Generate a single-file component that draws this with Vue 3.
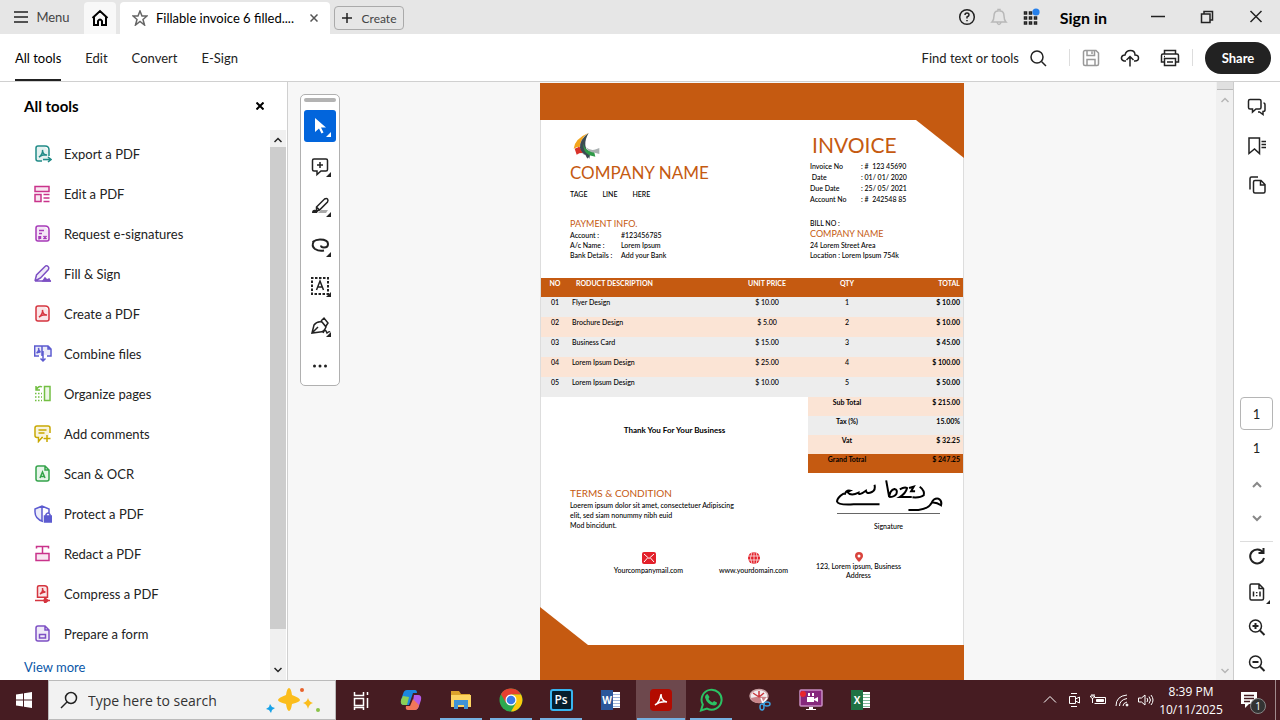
<script setup>
import { ref } from 'vue';

const menus = ['All tools', 'Edit', 'Convert', 'E-Sign'];
const activeMenu = ref('All tools');
const pageNo = ref('1');
const search = ref('');

const pdfMark = 'M5 12c2-1 4-4.500 3.500-7 0 3 2 5 4.500 5-3-.5-6 .5-8 2z';

// tint = pale area, line = outline, solid = filled parts
const tools = [
  { name: 'Export a PDF', color: '#1f8a86', tint: 'M2 2h9l4 4v10H2z',
    line: 'M8 16H4a2 2 0 0 1-2-2V3a2 2 0 0 1 2-2h7q4 0 4 4v6M9 14.500h7M14 12l3 2.500-3 2.500' + pdfMark },
  { name: 'Edit a PDF', color: '#c9338b', tint: 'M1 2h14v5H1zM1 10h6v7H1z',
    line: 'M1 1.500h14v5H1zM1 9.500h6v7H1zM9.500 9.500H15.500M9.500 13H15.500M9.500 16.500H15.500' },
  { name: 'Request e-signatures', color: '#a63ab8', tint: 'M2 2h9l4 4v10H2z',
    line: 'M4 1h7q4 0 4 4v9a2 2 0 0 1-2 2H4a2 2 0 0 1-2-2V3a2 2 0 0 1 2-2zM5 5.500h5M5 8.500h3M9.500 11l3 3M12.500 11l-3 3M5 11v3.500M6.500 11v3' },
  { name: 'Fill & Sign', color: '#7d50c4', tint: 'M3 11L11 2l4 2-8 10-5 2z',
    line: 'M1 16l1.500-6L10.500 2q2-2 3.500-.5t0 3.500l-7.500 8L1 16h8M9 16h8', solid: 'M9 16l2-3 2 2 2-1 1 2z' },
  { name: 'Create a PDF', color: '#d5353f', tint: 'M2 2h9l4 4v10H2z',
    line: 'M4 1h7q4 0 4 4v9a2 2 0 0 1-2 2H4a2 2 0 0 1-2-2V3a2 2 0 0 1 2-2z' + pdfMark },
  { name: 'Combine files', color: '#5c5bd0', tint: 'M1 1h15v9H1z',
    line: 'M5 11H0.700V1H8v10M8 1h6l3 3v7h-4M14 1v3h3M9 6v10M6.500 13.500L9 16l2.500-2.500M2.500 8q3-2 2-5 0 3 2 4-2 0-4 1' },
  { name: 'Organize pages', color: '#73bf43', tint: 'M10 2h5v13h-5z',
    line: 'M10.500 1.500h5.500v14h-5.500zM2 5q3-5 6-3M2 1v4h4', dash: 'M1 8.500h7M1 12h7M1 15.500h7' },
  { name: 'Add comments', color: '#c8a800', tint: 'M2 2h13v10H2z',
    line: 'M9 12.500H8l-3.500 4v-4H3a2 2 0 0 1-2-2V3a2 2 0 0 1 2-2h11a2 2 0 0 1 2 2v5M4.500 5h8M4.500 8h6M13 10v7M9.500 13.500h7' },
  { name: 'Scan & OCR', color: '#35a34b', tint: 'M2 2h9l4 4v10H2z',
    line: 'M4 1h7l4 4v9a2 2 0 0 1-2 2H4a2 2 0 0 1-2-2V3a2 2 0 0 1 2-2zM11 1v4h4M6 13l2.500-6 2.500 6M7 11.500h3' },
  { name: 'Protect a PDF', color: '#5c5bd0', tint: 'M1 3l7-2v15Q1 13 1 3z',
    line: 'M9 16.500Q1 14 1 7V4l7-3 7 3v4M8 1v15M12 11V9.500q2-3 4 0V11', solid: 'M10.500 11h7v6h-7z' },
  { name: 'Redact a PDF', color: '#c9338b', tint: 'M2 9h13v6H2z',
    line: 'M2 8.500h13v7H2zM8.500 1v7M2.500 3.500V1.500h12v2' },
  { name: 'Compress a PDF', color: '#d5353f', tint: 'M4 1h7l3 3v8H4z',
    line: 'M5 .8h5.500q3 0 3 3v8.500h-10V2q0-1.200 1.500-1.200zM1 15.500h15M6 9c2-1 3-3 2.500-6 0 3 1 4 3 4-2 0-4 1-5.500 2', solid: 'M11 13l3 2.500-3 2.500-1-2.500z' },
  { name: 'Prepare a form', color: '#7d50c4', tint: 'M2 2h9l4 4v10H2z',
    line: 'M4 1h7l4 4v9a2 2 0 0 1-2 2H4a2 2 0 0 1-2-2V3a2 2 0 0 1 2-2zM11 1v4h4M5.500 9.500h6V13h-6z' },
];

const meta = [
  ['Invoice No', ': #  123 45690'],
  ['\u00a0Date', ': 01/ 01/ 2020'],
  ['Due Date', ': 25/ 05/ 2021'],
  ['Account No', ': #  242548 85'],
];

const payment = [
  ['Account :', '#123456785'],
  ['A/c Name :', 'Lorem Ipsum'],
  ['Bank Details :', 'Add your Bank'],
];

const items = [
  ['01', 'Flyer Design', '$ 10.00', '1', '$ 10.00'],
  ['02', 'Brochure Design', '$ 5.00', '2', '$ 10.00'],
  ['03', 'Business Card', '$ 15.00', '3', '$ 45.00'],
  ['04', 'Lorem Ipsum Design', '$ 25.00', '4', '$ 100.00'],
  ['05', 'Lorem Ipsum Design', '$ 10.00', '5', '$ 50.00'],
];

const totals = [
  ['Sub Total', '$ 215.00'],
  ['Tax (%)', '15.00%'],
  ['Vat', '$ 32.25'],
  ['Grand Totral', '$ 247.25'],
];
</script>

<template>
  <div class="app">
    <header class="titlebar">
      <button class="menu-btn">
        <svg width="14" height="12" viewBox="0 0 14 12"><path d="M0 1h14M0 6h14M0 11h14" /></svg>
        Menu
      </button>
      <button class="home" aria-label="Home">
        <svg width="18" height="18" viewBox="0 0 18 18"><path class="bold" d="M1.500 9L9 2l7.500 7M3 8v8h4v-4q2-3 4 0v4h4V8" /></svg>
      </button>
      <div class="doc-tab">
        <svg width="16" height="16" viewBox="0 0 16 16"><path class="star" d="M8 1l2 5h5l-4 3.500L12.500 15 8 11.500 3.500 15 5 9.500 1 6h5z" /></svg>
        <span>Fillable invoice 6 filled....</span>
        <button aria-label="Close tab"><svg width="8" height="8" viewBox="0 0 8 8"><path d="M.5.5l7 7M7.500.5l-7 7" /></svg></button>
      </div>
      <button class="create">
        <svg width="10" height="10" viewBox="0 0 10 10"><path d="M5 0v10M0 5h10" /></svg>
        Create
      </button>
      <div class="title-right">
        <button aria-label="Help">
          <svg width="18" height="18" viewBox="0 0 18 18"><circle cx="9" cy="9" r="7.300" /><path d="M7 7q0-2 2-2t2 2q0 1-2 2v1.500M9 12v1.300" /></svg>
        </button>
        <button aria-label="Notifications">
          <svg width="18" height="18" viewBox="0 0 18 18"><path class="pale" d="M2 14q2-2 2-6 0-5 4-5V1.500h2V3q4 0 4 5 0 4 2 6zM7 14.500q2 4 4 0" /></svg>
        </button>
        <button aria-label="Apps">
          <svg width="18" height="18" viewBox="0 0 18 18">
            <path d="M2.500 4h2v2h-2zM7.500 4h2v2h-2zM2.500 9h2v2h-2zM7.500 9h2v2h-2zM12.500 9h2v2h-2zM2.500 14h2v2h-2zM7.500 14h2v2h-2zM12.500 14h2v2h-2z" />
            <circle class="dot" cx="14" cy="4" r="3.600" />
          </svg>
        </button>
        <button class="sign-in">Sign in</button>
      </div>
      <div class="window-btns">
        <button aria-label="Minimize"><svg width="14" height="14" viewBox="0 0 14 14"><path d="M0 6.500h14" /></svg></button>
        <button aria-label="Restore"><svg width="14" height="14" viewBox="0 0 14 14"><path d="M1.500 4h8.500v8.500H1.500zM4 4V1.500h8.500V10h-2.500" /></svg></button>
        <button aria-label="Close"><svg width="14" height="14" viewBox="0 0 14 14"><path d="M1.500 1l11 11M12.500 1l-11 11" /></svg></button>
      </div>
    </header>

    <nav class="toolbar">
      <button v-for="m in menus" :key="m" class="menu" :class="{ active: m == activeMenu }" @click="activeMenu = m">{{ m }}</button>
      <div class="toolbar-right">
        <button class="find">
          Find text or tools
          <svg width="18" height="18" viewBox="0 0 18 18"><circle cx="8" cy="8" r="6" /><path d="M12.500 12.500L17 17" /></svg>
        </button>
        <i class="sep"></i>
        <button aria-label="Save">
          <svg width="18" height="18" viewBox="0 0 18 18"><path class="gray" d="M1.500 3a1.500 1.500 0 0 1 1.500-1.500h11l2.500 2.500v11a1.500 1.500 0 0 1-1.500 1.500H3A1.500 1.500 0 0 1 1.500 15zM5 2v4.500h7.500V2M5 16v-5.500h8V16M10 2.500v2.500" /></svg>
        </button>
        <button aria-label="Upload">
          <svg width="20" height="18" viewBox="0 0 20 18"><path d="M6 12H4q-3-1-2.500-3.500T5 6q1-4.500 5.500-4.500T15 6q3.500 0 3.500 3T15 12h-1M10 17.500V8M6.500 11L10 7.500l3.500 3.500" /></svg>
        </button>
        <button aria-label="Print">
          <svg width="20" height="18" viewBox="0 0 20 18"><path d="M4.500 5V1.500h11V5M4.500 13h-3V6.500q0-1.500 1.500-1.500h14q1.500 0 1.500 1.500V13h-3M4.500 9.500h11v7h-11zM7 13h6M4 7.500h1" /></svg>
        </button>
        <i class="sep"></i>
        <button class="share">Share</button>
      </div>
    </nav>

    <main class="main">
      <aside class="sidebar">
        <div class="side-head">
          <h2>All tools</h2>
          <button aria-label="Close panel"><svg width="8" height="8" viewBox="0 0 8 8"><path class="bold" d="M.5.500l7 7M7.500.500l-7 7" /></svg></button>
        </div>
        <div class="side-body">
          <ul>
            <li v-for="t in tools" :key="t.name">
              <button>
                <svg width="18" height="18" viewBox="0 0 18 18">
                  <g :stroke="t.color">
                    <path :d="t.tint" :fill="t.color" fill-opacity=".12" stroke="none" />
                    <path :d="t.line" />
                    <path v-if="t.dash" :d="t.dash" stroke-dasharray="1.500 1.500" />
                    <path v-if="t.solid" :d="t.solid" :fill="t.color" />
                  </g>
                </svg>
                {{ t.name }}
              </button>
            </li>
            <li class="more"><a href="#">View more</a></li>
          </ul>
          <div class="scrollbar">
            <svg width="8" height="6" viewBox="0 0 8 6"><path d="M.5 5L4 1.500 7.500 5" /></svg>
            <div class="thumb"></div>
            <svg width="8" height="6" viewBox="0 0 8 6"><path d="M.5 1L4 4.500 7.500 1" /></svg>
          </div>
        </div>
      </aside>

      <section class="viewer">
        <div class="palette">
          <div class="handle"></div>
          <button class="on" aria-label="Select">
            <svg width="32" height="32" viewBox="0 0 32 32"><path class="fill" d="M11 8v14l4-3.500 2.500 5 2-1-2.500-5h5z" /><path class="fill" d="M27 22v5h-5z" /></svg>
          </button>
          <button aria-label="Add comment">
            <svg width="32" height="32" viewBox="0 0 32 32"><path d="M10 9h12q1.500 0 1.500 1.500v9q0 1.500-1.500 1.500h-5l-4 3.500V21h-3q-1.500 0-1.500-1.500v-9Q8.500 9 10 9zM16 12v6M13 15h6" /><path class="fill" d="M27 22v5h-5z" /></svg>
          </button>
          <button aria-label="Highlight">
            <svg width="32" height="32" viewBox="0 0 32 32"><path class="shade" d="M14 23l3-3h7l-2 3z" /><path d="M12.500 17l8-8q2-1 3 0t0 3l-8 8-3 1zM12.500 17l3 3" /><path class="fill" d="M8 23q0-4 4-3l2 1-1 2zM27 22v5h-5z" /></svg>
          </button>
          <button aria-label="Draw">
            <svg width="32" height="32" viewBox="0 0 32 32"><path class="thick" d="M8.500 12Q12 9.500 16 9.500q8 0 8 4.500 0 3.500-4 3.500-3 0-3-2M10 11q-3 5 1 8 4 2.500 9 1.500" /><path class="fill" d="M27 22v5h-5z" /></svg>
          </button>
          <button aria-label="Text box">
            <svg width="32" height="32" viewBox="0 0 32 32"><path class="thick" stroke-dasharray="2.500 1.500" d="M7 8h17v16H8V8" /><path d="M12.500 20L16 11l3.500 9M14 17h4" /><path class="fill" d="M27 22v5h-5z" /></svg>
          </button>
          <button aria-label="Sign">
            <svg width="32" height="32" viewBox="0 0 32 32"><path d="M8 23l2-8q3-4 8-3l4 5q-2 5-6 5zM8 23l6-6M17 11l3-3 4 5-2 3M19 23q2-4 3-2t1 2q2-2 3-1" /><path class="fill" d="M27 22v5h-5z" /></svg>
          </button>
          <button aria-label="More">
            <svg width="32" height="32" viewBox="0 0 32 32"><circle class="fill" cx="10.500" cy="16" r="1.500" /><circle class="fill" cx="16" cy="16" r="1.500" /><circle class="fill" cx="21.500" cy="16" r="1.500" /></svg>
          </button>
        </div>

        <article class="page">
          <div class="band top"></div>
          <div class="cols head">
            <div>
              <svg class="logo" width="28" height="28" viewBox="0 0 84 84">
                <path fill="#f3a51c" d="M50 2Q8 20 5 50l12-6 5 8q2-34 28-50z" />
                <path fill="#d9322a" d="M8 50l14-6 12 18-12 2-8 4z" />
                <path fill="#3b4a52" d="M50 3Q22 22 24 48q4 16 22 24l6 8 2-12Q28 40 50 3zM26 64l14 4 6 12 6-10z" />
                <path fill="#2f9a48" d="M34 34q4 26 32 24l4 16-18-4Q32 60 34 34z" />
                <path fill="#a9afb0" d="M42 46q14 12 30 6l10-4v18l-14-4q-18 0-26-16z" />
              </svg>
              <h1>COMPANY NAME</h1>
              <p class="tag"><span>TAGE</span><span>LINE</span><span>HERE</span></p>
            </div>
            <div>
              <h1 class="invoice">INVOICE</h1>
              <dl class="meta">
                <template v-for="m in meta" :key="m[0]"><dt>{{ m[0] }}</dt><dd>{{ m[1] }}</dd></template>
              </dl>
            </div>
          </div>

          <div class="cols parties">
            <div>
              <h3>PAYMENT INFO.</h3>
              <dl class="pay">
                <template v-for="p in payment" :key="p[0]"><dt>{{ p[0] }}</dt><dd>{{ p[1] }}</dd></template>
              </dl>
            </div>
            <div>
              <p>BILL NO :</p>
              <h3>COMPANY NAME</h3>
              <p>24 Lorem Street Area</p>
              <p>Location : Lorem Ipsum 754k</p>
            </div>
          </div>

          <table>
            <colgroup><col class="c-no" /><col class="c-desc" /><col class="c-unit" /><col class="c-qty" /><col /></colgroup>
            <thead>
              <tr><th>NO</th><th>RODUCT DESCRIPTION</th><th>UNIT PRICE</th><th>QTY</th><th>TOTAL</th></tr>
            </thead>
            <tbody class="items">
              <tr v-for="row in items" :key="row[0]"><td v-for="(cell, i) in row" :key="i">{{ cell }}</td></tr>
            </tbody>
            <tbody class="totals">
              <tr v-for="(t, i) in totals" :key="t[0]">
                <td v-if="i == 0" class="thanks" colspan="3" rowspan="4">Thank You For Your Business</td>
                <th>{{ t[0] }}</th><td>{{ t[1] }}</td>
              </tr>
            </tbody>
          </table>

          <div class="cols terms">
            <div>
              <h3>TERMS &amp; CONDITION</h3>
              <p>Loerem ipsum dolor sit amet, consectetuer Adipiscing<br />elit, sed siam nonummy nibh euid<br />Mod bincidunt.</p>
            </div>
            <div class="signature">
              <svg width="108" height="35" viewBox="895 10 325 105">
                <path d="M922 56q-20 12-21 24 2 12 50 9h78M924 60q4-14 16-12l-8 4q10 14 34 2 0 10 22-6 2 12 18 4 12-6 8-22" />
                <path d="M1049 17l9 50q2-20 16-24 10 2 6 14-6 10-22 10h8M1090 44q14-8 22-4-4 16-22 27h36M1118 40l14-4-8 14h12M1150 36q16 12 12 26-10 8-34 6" />
                <path d="M1186 84q6-14 20-12 12 6 8 20-14-10-28-8-8 18-40 22h-30" />
              </svg>
              <p>Signature</p>
            </div>
          </div>

          <div class="contacts">
            <div>
              <svg width="14" height="12" viewBox="0 0 14 12"><rect x="0" y="0" width="14" height="12" rx="2" fill="#e3202a" /><path class="white" d="M2 2l5 4.500L12 2M2 10l3.500-4M12 10L8.500 6" /></svg>
              <p>Yourcompanymail.com</p>
            </div>
            <div>
              <svg width="14" height="12" viewBox="0 0 14 12"><circle cx="7" cy="6" r="6" fill="#e3202a" /><path class="white" d="M1 4h12M1 8h12M7 0v12M5 0Q2 6 5 12M9 0q3 6 0 12" stroke-width=".7" /></svg>
              <p>www.yourdomain.com</p>
            </div>
            <div class="address">
              <svg width="8" height="10" viewBox="0 0 8 10"><path fill="#d9433c" d="M4 10Q0 6 0 4a4 4 0 0 1 8 0q0 2-4 6z" /><circle cx="4" cy="4" r="1.500" fill="#fff" /></svg>
              <p>123, Lorem ipsum, Business Address</p>
            </div>
          </div>
          <div class="band bottom"></div>
        </article>
      </section>

      <div class="doc-scroll">
        <div class="thumb"></div>
        <svg width="8" height="6" viewBox="0 0 8 6"><path d="M.5 5L4 1.500 7.500 5" /></svg>
        <svg class="down" width="8" height="6" viewBox="0 0 8 6"><path d="M.5 1L4 4.500 7.500 1" /></svg>
      </div>

      <aside class="rail">
        <button class="tall" aria-label="Comments">
          <svg width="20" height="20" viewBox="0 0 20 20"><path d="M3 2.500h9.500q1.500 0 1.500 1.500v6.500q0 1.500-1.500 1.500H9l-3.500 3v-3H3q-1.500 0-1.500-1.500V4Q1.500 2.500 3 2.500zM16.500 6q1.500 0 1.500 2v5q0 1.500-2 1.500v3L12.500 15H11" /></svg>
        </button>
        <button class="tall" aria-label="Bookmarks">
          <svg width="20" height="20" viewBox="0 0 20 20"><path d="M2 2h10.500v15.500L7.500 13 2 17.500zM14.500 5.500H19M14.500 8.500H19M14.500 11.500H19" /></svg>
        </button>
        <button class="tall" aria-label="Pages">
          <svg width="20" height="20" viewBox="0 0 20 20"><path d="M3 14.500V3.500Q3 2 4.500 2H11M8 5.500h6l4 4v7q0 1.500-1.500 1.500H8q-1.500 0-1.500-1.500V7Q6.500 5.500 8 5.500zM13.500 6v4H18" /></svg>
        </button>
        <input v-model="pageNo" class="page-no" aria-label="Page number" />
        <span class="count">1</span>
        <button aria-label="Previous page"><svg width="12" height="8" viewBox="0 0 12 8"><path class="arrow" d="M2 6l4-4 4 4" /></svg></button>
        <button class="next" aria-label="Next page"><svg width="12" height="8" viewBox="0 0 12 8"><path class="arrow" d="M2 2l4 4 4-4" /></svg></button>
        <hr />
        <div class="zoom">
          <button aria-label="Rotate"><svg width="20" height="20" viewBox="0 0 20 20"><path class="thick" d="M16 6.500A7 7 0 1 0 17 12M16.500 2v5h-5" /></svg></button>
          <button class="fit" aria-label="Actual size">
            <svg width="20" height="20" viewBox="0 0 20 20"><path d="M4.500 2H12l4.500 4.500v10q0 1.500-1.500 1.500H4.500Q3 18 3 16.500v-13Q3 2 4.500 2zM12 2v4.500h4.500M6.500 9.500v5M13 9.500v5M9.700 10v1.300M9.700 13v1.300" /></svg>
            <svg class="corner" width="4" height="4" viewBox="0 0 4 4"><path class="fill" d="M4 0v4H0z" /></svg>
          </button>
          <button aria-label="Zoom in"><svg width="20" height="20" viewBox="0 0 20 20"><circle cx="8.500" cy="8" r="6" /><path class="thick" d="M13 12.500l4.500 4.500M8.500 5v6M5.500 8h6" /></svg></button>
          <button aria-label="Zoom out"><svg width="20" height="20" viewBox="0 0 20 20"><circle cx="8.500" cy="8" r="6" /><path class="thick" d="M13 12.500l4.500 4.500M5.500 8h6" /></svg></button>
        </div>
      </aside>
    </main>

    <footer class="taskbar">
      <button class="start" aria-label="Start">
        <svg width="16" height="16" viewBox="0 0 16 16"><path fill="#fff" stroke="none" d="M0 2.500l7-1v6H0zM8 1.300L16 0v7.500H8zM0 8.500h7v6l-7-1zM8 8.500h8V16l-8-1.200z" /></svg>
      </button>
      <label class="search">
        <svg width="18" height="18" viewBox="0 0 18 18"><circle cx="11" cy="7" r="5.500" /><path d="M7 11l-6 6" /></svg>
        <input v-model="search" placeholder="Type here to search" aria-label="Search" />
        <svg width="60" height="28" viewBox="0 0 60 28">
          <g stroke="none">
            <path fill="#fbbd1c" d="M23 2q2 0 3 7 8 3 8 5t-8 4q-1 7-3 7t-3-7q-8-2-8-4t8-5q1-7 3-7z" />
            <path fill="#fbbd1c" d="M42 12q1 4 5 5-4 1-5 6-1-5-5-6 4-1 5-5z" />
            <path fill="#17a2e8" d="M4 18l2 3 3 1-3 2-1 3-2-3-3-1 3-2z" />
            <circle cx="36" cy="4" r="2" fill="#e8622c" /><circle cx="52" cy="24" r="2" fill="#8bc34a" />
          </g>
        </svg>
      </label>
      <button class="app-btn" aria-label="Task view">
        <svg width="24" height="24" viewBox="0 0 24 24"><path class="white" d="M5.500 4v3.500h9V4M5.500 10.500h9v7h-9zM5.500 22v-2.500h9V22M18.500 4v3M18.500 10v10" /></svg>
      </button>
      <button class="app-btn" aria-label="Copilot">
        <svg width="24" height="24" viewBox="0 0 24 24">
          <g stroke="none">
            <path fill="#1b87e0" d="M8 2h8q2 0 2 3h-4l-4 12H5q-4 0-3-5L4 6q1-4 4-4z" />
            <path fill="#8ccf56" d="M2 12l2-4 6 1-2 8H5q-4 0-3-5z" />
            <path fill="#b45be8" d="M15 7h4q4 0 3 5l-2 6q-1 4-5 4l-2-3z" />
            <path fill="#f2775a" d="M14 11l6 6q-1 5-4 5H9q-3 0-2-4h4z" />
          </g>
        </svg>
      </button>
      <button class="app-btn running" aria-label="File Explorer">
        <svg width="24" height="24" viewBox="0 0 24 24"><g stroke="none"><path fill="#dca32c" d="M2 3h8l2 3h9v4H2z" /><path fill="#fcd462" d="M2 7h20v12H2z" /><path fill="#3f93d6" d="M5 12h14v9h-4v-4H9v4H5z" /></g></svg>
      </button>
      <button class="app-btn running" aria-label="Chrome">
        <svg width="24" height="24" viewBox="0 0 24 24">
          <g stroke="none">
            <circle cx="12" cy="12" r="11.500" fill="#2da94f" />
            <path fill="#e6402f" d="M2 6.200A11.500 11.500 0 0 1 22 6.500H12L7 15z" />
            <path fill="#fdc90d" d="M12 6.500h10A11.500 11.500 0 0 1 12 23.500l5-8.500z" />
            <circle cx="12" cy="12" r="5.500" fill="#fff" /><circle cx="12" cy="12" r="4.300" fill="#3a7be8" />
          </g>
        </svg>
      </button>
      <button class="app-btn running" aria-label="Photoshop"><span class="ps">Ps</span></button>
      <button class="app-btn" aria-label="Word"><span class="office word"><b>W</b></span></button>
      <button class="app-btn running current" aria-label="Acrobat">
        <span class="acrobat">
          <svg width="16" height="16" viewBox="0 0 16 16"><path class="white" d="M2 13q5-3 6-11 0 7 6 8-7-1-12 3" /></svg>
        </span>
      </button>
      <button class="app-btn running" aria-label="WhatsApp">
        <svg width="24" height="24" viewBox="0 0 24 24">
          <path stroke="#2bc264" stroke-width="2" d="M3.800 16.500A10 10 0 1 1 8 20.600L2 22.500z" />
          <path fill="#2bc264" stroke="none" d="M8.500 6l2 3-1 2q2 3 4 3.500l1.500-1.500 3 1.500q0 3-3 3-7-1-9-8 0-3 2.500-3.500z" />
        </svg>
      </button>
      <button class="app-btn" aria-label="Snipping Tool">
        <svg width="24" height="24" viewBox="0 0 24 24">
          <ellipse cx="10" cy="8" rx="9" ry="6.500" fill="#f1edf0" stroke="#c9a0a4" />
          <path fill="#c9848a" stroke="none" d="M2 10q7-2 16-1-3 5-8 6-6 0-8-5z" /><path stroke="#c9363d" d="M10 9L4 5M10 9V3M10 9l5-4" />
          <path stroke="#fff" d="M14 15l-2-5M14 15l4-5" />
          <ellipse cx="13" cy="19" rx="2" ry="3" stroke="#3ba0e0" /><ellipse cx="18" cy="16" rx="3" ry="2" stroke="#3ba0e0" />
        </svg>
      </button>
      <button class="app-btn" aria-label="Screen recorder">
        <svg width="24" height="24" viewBox="0 0 24 24"><rect x="1" y="2" width="22" height="16" rx="1" fill="#86287c" stroke="#c98cc4" /><path fill="#fff" stroke="none" d="M8 9h7v5H8zM15 11l4-2v5l-4-2zM9 5h2v3H9zM13 5h2v3h-2zM10 19h4v2h3v1H7v-1h3z" /><circle cx="4" cy="6" r="3" fill="#e8262c" stroke="none" /></svg>
      </button>
      <button class="app-btn" aria-label="Excel"><span class="office excel"><b>X</b></span></button>

      <div class="tray">
        <button aria-label="Show hidden icons"><svg width="18" height="16" viewBox="0 0 18 16"><path d="M3 10.500L9 4.500l6 6" /></svg></button>
        <button aria-label="Meet now"><svg width="18" height="16" viewBox="0 0 18 16"><path d="M4.500 4.500h6v7h-6zM10.500 7l4-2v6l-4-2M6 1.500h6M6 14.500h6" /></svg></button>
        <button aria-label="Battery"><svg width="18" height="16" viewBox="0 0 18 16"><path d="M5.500 5.500H16.500v6H5.500M3 2v2M5 2v2M1.500 4h4v1q-2 3-4 0zM3.500 6v5" /><path fill="#fff" d="M7.500 7.500h7v2h-7z" /></svg></button>
        <button aria-label="Wi-Fi"><svg width="18" height="16" viewBox="0 0 18 16"><path d="M3 14Q3 4 14 3M6.500 14q0-6 7.500-7.500M10 14q0-3 4-4" /><circle cx="14" cy="13" r="1" fill="#fff" /></svg></button>
        <button aria-label="Volume"><svg width="18" height="16" viewBox="0 0 18 16"><path d="M1.500 6h3L8 3v10l-3.500-3h-3zM10 6q1.500 2 0 4M12 4.500q3 3.500 0 7M14 3q4 5 0 10" /></svg></button>
      </div>
      <time class="clock">8:39 PM<br />10/11/2025</time>
      <button class="notif" aria-label="Notifications">
        <svg width="18" height="18" viewBox="0 0 18 18"><path fill="#fff" stroke="none" d="M1 1h16v12H9l-4 4v-4H1z" /><path stroke="#461c22" d="M4 4.500h10M4 7.500h10M4 10.500h6" /></svg>
        <span class="badge">1</span>
      </button>
      <button class="peek" aria-label="Show desktop"></button>
    </footer>
  </div>
</template>

<style>
body { margin: 0; }
</style>

<style scoped>
* { box-sizing: border-box; }
.app { display: flex; flex-direction: column; height: 100vh; overflow: hidden;
  font-family: Lato, "Liberation Sans", sans-serif; font-size: 13px; color: #222; background: #fff; }
button { border: 0; padding: 0; background: none; font: inherit; color: inherit;
  display: inline-flex; align-items: center; justify-content: center; white-space: nowrap; }
svg { fill: none; stroke: #222; stroke-width: 1.5; flex: none; }
h1, h2, h3, p, ul, dl, dd { margin: 0; padding: 0; }
ul { list-style: none; }
.fill { fill: #222; stroke: none; }
.white { stroke: #fff; }

.titlebar { display: flex; align-items: center; height: 34px; background: #e6e6e6; flex: none; }
.menu-btn { gap: 8px; width: 84px; color: #444; }
.home { width: 32px; height: 32px; margin: 2px 4px 0 0; background: #f8f8f8; border-radius: 4px 4px 0 0; }
.bold { stroke: #000; stroke-width: 2; }
.star { stroke: #666; }
.doc-tab { display: flex; align-items: center; width: 210px; height: 32px; margin: 2px 4px 0 0;
  padding: 0 12px; gap: 8px; background: #fff; border-radius: 4px 4px 0 0; color: #000; white-space: nowrap; }
.doc-tab button { margin-left: auto; }
.doc-tab button svg { stroke: #555; }
.create { gap: 10px; width: 70px; height: 24px; border: 1px solid #aaa; border-radius: 4px; font-size: 12px; color: #444; margin-top: 2px; }
.title-right { display: flex; align-items: center; gap: 14px; margin-left: auto; }
.title-right .pale { stroke: #b8b8b8; }
.title-right .dot { fill: #2680eb; stroke: none; }
.sign-in { font-size: 16px; font-weight: 700; color: #000; margin-left: 6px; }
.window-btns { display: flex; margin-left: 26px; }
.window-btns button { width: 49px; height: 34px; }

.toolbar { display: flex; align-items: stretch; gap: 24px; height: 48px; padding: 0 9px 0 15px;
  border-bottom: 1px solid #d0d0d0; flex: none; }
.menu { border-bottom: 2px solid transparent; padding-top: 2px; }
.menu.active { border-color: #222; color: #000; }
.toolbar-right { display: flex; align-items: center; gap: 20px; margin-left: auto; }
.find { gap: 10px; margin-right: 10px; }
.sep { width: 1px; height: 17px; background: #ddd; margin: 0 -8px; }
.gray { stroke: #999; }
.share { width: 66px; height: 32px; border-radius: 16px; background: #222; color: #fff; font-weight: 700; }

.main { display: flex; flex: 1; min-height: 0; }
.sidebar { display: flex; flex-direction: column; width: 288px; border-right: 1px solid #d0d0d0; flex: none; }
.side-head { display: flex; align-items: center; justify-content: space-between; height: 48px; padding: 0 23px 0 24px; flex: none; }
.side-head h2 { font-size: 15px; font-weight: 700; color: #000; }
.side-body { display: flex; flex: 1; min-height: 0; }
.side-body ul { flex: 1; overflow: hidden; padding-top: 4px; }
li { height: 40px; display: flex; }
li button { flex: 1; justify-content: flex-start; gap: 12px; padding-left: 34px; }
.more { height: 26px; align-items: center; padding-left: 24px; }
a { color: #0a57a8; text-decoration: none; }
.scrollbar { display: flex; flex-direction: column; align-items: center; width: 16px; margin-right: 1px;
  padding: 7px 0; background: #f0f0f0; }
.scrollbar .thumb { width: 16px; margin: 4px 0 auto; height: 90%; background: #cdcdcd; }

.viewer { position: relative; flex: 1; min-width: 0; display: flex; justify-content: center; padding-top: 1px;
  background: #f7f7f7; overflow: hidden; }
.palette { position: absolute; left: 12px; top: 12px; width: 40px; display: flex; flex-direction: column; align-items: center;
  gap: 8px; padding: 3px 3px 3px; background: #fff; border: 1px solid #b0b0b0; border-radius: 5px; }
.handle { width: 32px; height: 4px; border-radius: 2px; background: #b3b3b3; }
.palette button { width: 32px; height: 32px; border-radius: 3px; }
.palette .on { background: #0265dc; }
.palette .on .fill { fill: #fff; }
.shade { fill: #aaa; stroke: none; }

.page { display: flex; flex-direction: column; width: 424px; background: #fff; border: solid #ddd; border-width: 0 1px;
  font-size: 7px; line-height: 10px; color: #000; font-weight: 500; }
.page h1, .page h3 { color: #c55a11; font-weight: 400; }
.page h1 { font-size: 17px; line-height: 22px; white-space: nowrap; }
.page h1.invoice { font-size: 21px; line-height: 26px; margin: 12px 0 0 2px; }
.page h3 { font-size: 9px; line-height: 12px; }
.band { position: relative; background: #c55a11; margin: 0 -1px; flex: none; }
.band.top { height: 37px; }
.band.bottom { height: 35px; margin-top: auto; }
.band::after { content: ""; position: absolute; width: 48px; height: 38px; background: #c55a11; }
.band.top::after { right: 0; top: 100%; clip-path: polygon(0 0, 100% 0, 100% 100%); }
.band.bottom::after { left: 0; bottom: 100%; clip-path: polygon(0 0, 100% 100%, 0 100%); }
.cols { display: grid; grid-template-columns: 240px 1fr; padding-left: 29px; }
.logo { display: block; margin: 12px 0 2px 2px; stroke: none; }
.tag { display: flex; gap: 15px; margin-top: 5px; }
dl { display: grid; }
.meta { grid-template-columns: 51px 1fr; line-height: 11px; margin-top: 3px; }
.meta dd { white-space: pre; }
.pay { grid-template-columns: 51px 1fr; }
.parties { margin-top: 13px; }
table { margin: 18px 0 0; width: 100%; border-collapse: collapse; table-layout: fixed; line-height: 11px; }
.c-no { width: 28px; }
.c-desc { width: 157px; }
.c-unit { width: 82px; }
.c-qty { width: 78px; }
th, td { padding: 0; vertical-align: top; text-align: center; font-weight: 700; }
thead tr { height: 19px; background: #c55a11; color: #fff; }
th:nth-child(2) { text-align: left; padding-left: 7px; }
.items tr { height: 20px; background: #fbe4d5; }
.items tr:nth-child(odd) { background: #ededed; }
.items td { font-weight: 500; }
.items td:nth-child(2) { text-align: left; padding-left: 3px; }
.items td:last-child, thead th:last-child, .totals td:last-child { text-align: right; padding-right: 3px; font-weight: 700; }
.totals tr { height: 19px; }
.totals th, .totals td { background: #fbe4d5; }
.totals th { text-align: center; padding: 0; }
.totals tr:nth-child(2) > * { background: #ededed; }
.totals tr:last-child > * { background: #c55a11; }
.totals .thanks { background: #fff; vertical-align: middle; padding-bottom: 9px; font-size: 8px; }
.terms { margin-top: 5px; }
.terms h3 { margin-top: 9px; font-size: 10px; line-height: 13px; }
.signature { padding-left: 25px; width: 130px; }
.signature svg { display: block; stroke: #000; stroke-width: 6; }
.signature p { margin-left: 2px; padding-top: 7px; border-top: 1px solid #666; text-align: center; }
.contacts { display: flex; padding-left: 55px; margin-top: 21px; text-align: center; line-height: 9px; }
.contacts div { width: 105px; display: flex; flex-direction: column; align-items: center; gap: 2px; }
.contacts svg { stroke: none; stroke-width: 1; }
.contacts .address { gap: 0; }
.address p { width: 90px; }

.doc-scroll { display: flex; flex-direction: column; align-items: center; width: 17px; padding-bottom: 6px;
  background: #f0f0f0; flex: none; }
.doc-scroll svg { stroke: #b5b5b5; }
.doc-scroll .thumb { width: 16px; height: 8px; margin-bottom: 7px; background: #e0e0e0; border-bottom: 1px solid #bbb; }
.doc-scroll .down { margin-top: auto; }

.rail { display: flex; flex-direction: column; align-items: center; width: 47px; padding: 5px 1px 2px 0; border-left: 1px solid #ccc; flex: none; }
.rail button { width: 33px; height: 28px; flex: none; }
.rail .tall { height: 39px; }
.page-no { width: 33px; height: 33px; margin-top: auto; border: 1px solid #b5b5b5; border-radius: 4px; text-align: center; font: inherit; color: #222; padding: 0; }
.count { line-height: 20px; margin: 8px 0 13px; }
.rail .next { margin-top: 5px; }
.arrow { stroke: #888; stroke-width: 2; }
.thick { stroke-width: 2; }
.rail hr { width: 33px; height: 1px; margin: 9px 0 0; border: 0; background: #ddd; }
.zoom { display: flex; flex-direction: column; gap: 8px; }
.fit { position: relative; }
.corner { position: absolute; right: 3px; bottom: 2px; }

.taskbar { display: flex; align-items: stretch; height: 40px; background: #461c22; flex: none; color: #fff;
  font-family: "Open Sans", "Liberation Sans", sans-serif; }
.start { width: 48px; }
.search { display: flex; align-items: center; width: 288px; padding: 0 9px 0 11px; gap: 10px; background: #f2f2f2; border: 1px solid #bbb; }
.search input { flex: 1; min-width: 0; border: 0; padding: 0; background: none; font: inherit; font-size: 14px; color: #222; }
.search input::placeholder { color: #333; }
.app-btn { width: 50px; position: relative; }
.running::after { content: ""; position: absolute; left: 4px; right: 4px; bottom: 0; height: 2px; background: #76b0e0; }
.current { background: #6d484d; }
.current::after { left: 1px; right: 1px; }
.ps { width: 23px; height: 22px; border: 2px solid #38b5f0; border-radius: 3px; background: #051d2c; line-height: 18px; font-size: 12px; font-weight: 600; }
.office { display: flex; align-items: center; width: 18px; height: 16px; background: repeating-linear-gradient(#fff 0 2px, #9fb4d8 2px 3px); }
.office b { width: 12px; height: 20px; line-height: 20px; font-size: 10px; margin-left: -1px; flex: none; background: #2b579a; }
.excel { background: repeating-linear-gradient(#fff 0 2px, #7fb898 2px 3px); }
.excel b { background: #1f7244; }
.acrobat { display: flex; align-items: center; justify-content: center; width: 22px; height: 22px; border-radius: 4px; background: #b30b00; }
.tray { display: flex; gap: 6px; margin-left: auto; }
.tray svg { stroke: #fff; stroke-width: 1; }
.clock { width: 72px; padding-top: 3px; text-align: center; font-size: 12px; line-height: 18px; }
.notif { position: relative; width: 44px; margin-right: 4px; }
.badge { position: absolute; left: 23px; top: 18px; width: 16px; height: 16px; line-height: 14px; border: 1px solid #888; border-radius: 50%; background: #333; font-size: 10px; }
.peek { width: 5px; border-left: 1px solid #a08a8d; }
</style>
